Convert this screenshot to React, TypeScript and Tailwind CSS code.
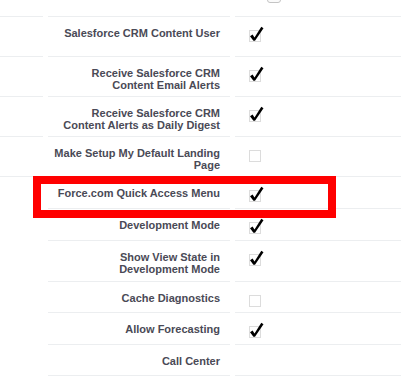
import React from "react";

type Row = {
  label: string[];
  h: string;
  check?: "on" | "off";
  leftLine?: boolean;
};

const rows: Row[] = [
  { label: ["Salesforce CRM Content User"], h: "h-[40px]", check: "on", leftLine: true },
  { label: ["Receive Salesforce CRM", "Content Email Alerts"], h: "h-[40px]", check: "on", leftLine: true },
  { label: ["Receive Salesforce CRM", "Content Alerts as Daily Digest"], h: "h-[40px]", check: "on", leftLine: true },
  { label: ["Make Setup My Default Landing", "Page"], h: "h-[40px]", check: "off", leftLine: true },
  { label: ["Force.com Quick Access Menu"], h: "h-[32px]", check: "on" },
  { label: ["Development Mode"], h: "h-[32px]", check: "on" },
  { label: ["Show View State in", "Development Mode"], h: "h-[41px]", check: "on" },
  { label: ["Cache Diagnostics"], h: "h-[31px]", check: "off" },
  { label: ["Allow Forecasting"], h: "h-[32px]", check: "on" },
  { label: ["Call Center"], h: "h-[31px]" },
];

const Box = ({ checked }: { checked: boolean }) => (
  <svg width="16" height="16" viewBox="0 0 16 16" className="overflow-visible">
    <rect x="0.5" y="0.5" width="11" height="11" fill="none" stroke="#b8b8b8" strokeDasharray="1 1" />
    {checked && (
      <path d="M1 6.2 L3.6 4.6 L5.5 7.6 L12.3 -3.2 L14.5 -1.8 L6 10.8 L4.4 10.8 Z" fill="#000" />
    )}
  </svg>
);

const App: React.FC = () => {
  return (
    <div className="relative w-[401px] h-[376px] overflow-hidden bg-white text-[11px] font-bold leading-[12px] text-[#4a4a56]" style={{ fontFamily: '"Liberation Sans", Arial, sans-serif' }}>
      {/* partially visible row above */}
      <div className="flex h-[17px]">
        <div className="w-[43px] border-b border-[#eceef0]" />
        <div className="ml-[5px] w-[182px] border-b border-[#eceef0]" />
        <div className="ml-[5px] flex-1 border-b border-[#eceef0] overflow-hidden">
          <div className="flex items-start -mt-[12px] pl-[14px]">
            <Box checked={false} />
            <div className="ml-[2px] w-[14px] h-[15px] rounded-[3px] border border-[#c4c4c4] bg-[#fafafa]" />
          </div>
        </div>
      </div>

      {rows.map((r, i) => (
        <div key={i} className={`flex ${r.h}`}>
          <div className={`w-[43px] ${r.leftLine ? "border-b border-[#eceef0]" : ""}`} />
          <div className="ml-[5px] w-[182px] border-b border-[#eceef0] pt-[10px] pr-[10px] text-right">
            {r.label.map((l, j) => (
              <div key={j} className="whitespace-nowrap">{l}</div>
            ))}
          </div>
          <div className="ml-[5px] flex-1 border-b border-[#eceef0] pt-[13px] pl-[14px]">
            {r.check && <Box checked={r.check === "on"} />}
          </div>
        </div>
      ))}

      {/* highlight annotation */}
      <div className="absolute left-[33px] top-[176px] w-[303px] h-[42px] border-[8px] border-[#ff0000]" />
    </div>
  );
};

export default App;
